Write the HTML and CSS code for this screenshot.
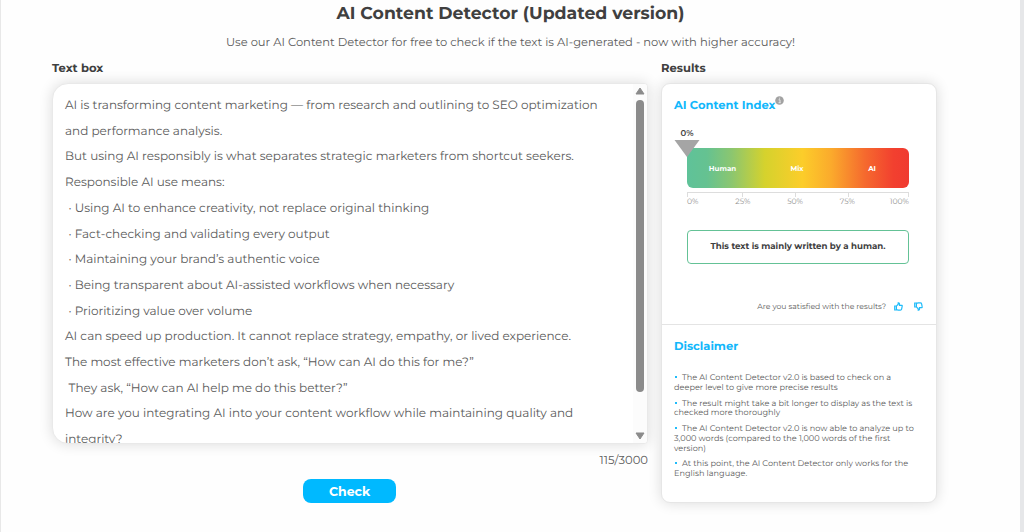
FILE: index.html
```
<!DOCTYPE html>
<html lang="en">

<head>
    <title>AI Content Detector</title>
    <meta charset="utf-8">
    <meta name="viewport" content="width=device-width, initial-scale=1">

    <link rel="stylesheet" href="styles.css">
</head>

<body>
    <h1>AI Content Detector (Updated version)</h1>
    <p class="intro">Use our AI Content Detector for free to check if the text is AI-generated - now with higher accuracy!</p>

    <div id="wrap">
        <div id="left">
            <h2>Text box</h2>
            <div id="textbox">
                <div class="text">
                    <p>AI is transforming content marketing — from research and outlining to SEO optimization</p>
                    <p>and performance analysis.</p>
                    <p>But using AI responsibly is what separates strategic marketers from shortcut seekers.</p>
                    <p>Responsible AI use means:</p>
                    <p class="item">· Using AI to enhance creativity, not replace original thinking</p>
                    <p class="item">· Fact-checking and validating every output</p>
                    <p class="item">· Maintaining your brand’s authentic voice</p>
                    <p class="item">· Being transparent about AI-assisted workflows when necessary</p>
                    <p class="item">· Prioritizing value over volume</p>
                    <p>AI can speed up production. It cannot replace strategy, empathy, or lived experience.</p>
                    <p>The most effective marketers don’t ask, “How can AI do this for me?”</p>
                    <p class="item">They ask, “How can AI help me do this better?”</p>
                    <p>How are you integrating AI into your content workflow while maintaining quality and</p>
                    <p>integrity?</p>
                </div>
                <div class="scroll">
                    <svg width="10" height="8" viewBox="0 0 10 8"><path d="M5 1 L9 7 H1 Z" fill="#8b8b8b" stroke="#8b8b8b" stroke-linejoin="round"/></svg>
                    <div class="thumb"></div>
                    <svg class="down" width="10" height="8" viewBox="0 0 10 8"><path d="M5 7 L9 1 H1 Z" fill="#8b8b8b" stroke="#8b8b8b" stroke-linejoin="round"/></svg>
                </div>
            </div>
            <div class="count">115/3000</div>
            <button class="check">Check</button>
        </div>

        <div id="right">
            <h2>Results</h2>
            <div id="card">
                <div class="index">
                    <h3>AI Content Index<svg class="info" width="9" height="9" viewBox="0 0 9 9"><circle cx="4.5" cy="4.5" r="4.3" fill="#a2a2a2"/><path d="M3.6 3.8 H5 V6.6 M3.5 6.7 H5.7 M4.1 2.2 H5.1" stroke="#e6e6e6" fill="none"/></svg></h3>
                    <div class="gauge">
                        <div class="pointer">
                            <span>0%</span>
                            <svg width="26" height="18" viewBox="0 0 26 18"><path d="M0.5 0 H25.5 L13 17 Z" fill="#a5a5a5"/></svg>
                        </div>
                        <div class="bar">
                            <span>Human</span>
                            <span>Mix</span>
                            <span>AI</span>
                        </div>
                        <div class="ruler"><i></i><i></i><i></i><i></i></div>
                        <div class="nums">
                            <span>0%</span>
                            <span>25%</span>
                            <span>50%</span>
                            <span>75%</span>
                            <span>100%</span>
                        </div>
                    </div>
                    <div class="result">This text is mainly written by a human.</div>
                    <div class="rate">
                        <span>Are you satisfied with the results?</span>
                        <svg width="9" height="9" viewBox="0 0 9 9"><path d="M0.7 4 H2.4 V8 H0.7 Z M2.4 4.1 L4.2 2.2 V0.8 Q5.8 0.4 5.5 3.3 H7.9 Q8.5 3.5 8.1 4.6 L7.6 7.2 Q7.4 8.2 6.4 8.2 H4.2 L2.4 7.7"/></svg>
                        <svg class="no" width="9" height="9" viewBox="0 0 9 9"><path d="M0.7 1 H2.4 V5 H0.7 Z M2.4 4.9 L4.2 6.8 V8.2 Q5.8 8.6 5.5 5.7 H7.9 Q8.5 5.5 8.1 4.4 L7.6 1.8 Q7.4 0.8 6.4 0.8 H4.2 L2.4 1.3"/></svg>
                    </div>
                </div>
                <div class="disclaimer">
                    <h3>Disclaimer</h3>
                    <ul>
                        <li>The AI Content Detector v2.0 is based to check on a<br>deeper level to give more precise results</li>
                        <li>The result might take a bit longer to display as the text is<br>checked more thoroughly</li>
                        <li>The AI Content Detector v2.0 is now able to analyze up to<br>3,000 words (compared to the 1,000 words of the first<br>version)</li>
                        <li>At this point, the AI Content Detector only works for the<br>English language.</li>
                    </ul>
                </div>
            </div>
        </div>
    </div>
</body>

</html>
```

FILE: styles.css
```
* {
    box-sizing: border-box;
}

body {
    margin: 0;
    height: 532px;
    overflow: hidden;
    font-family: Montserrat, Inter, sans-serif;
    text-rendering: geometricPrecision;
    color: #5b5b5b;
    background: #fefefe;
    border-left: 1px solid #e8e8e8;
    border-right: 4px solid #e6e7e9;
}

h1, h2, h3, p, ul {
    margin: 0;
    padding: 0;
}

h1 {
    padding-top: 3px;
    line-height: 22px;
    font-size: 17.3px;
    font-weight: 700;
    color: #404040;
    text-align: center;
}

.intro {
    margin-top: 8px;
    line-height: 18px;
    font-size: 11.53px;
    text-align: center;
}

h2 {
    line-height: 16px;
    font-size: 11.6px;
    font-weight: 700;
    color: #404040;
}

#wrap {
    display: flex;
    gap: 13px;
    margin: 9px 0 0 51px;
}

#left {
    width: 596px;
    display: flex;
    flex-direction: column;
}

#textbox {
    margin-top: 7px;
    height: 361px;
    display: flex;
    justify-content: space-between;
    overflow: hidden;
    background: white;
    border: 1px solid #e9e9e9;
    border-radius: 16px 4px 4px 16px;
    box-shadow: 0 0 14px rgba(0, 0, 0, .14);
}

.text {
    padding: 9px 0 0 12px;
    font-size: 12px;
    line-height: 25.7px;
    white-space: nowrap;
}

.item {
    padding-left: 3.5px;
}

.scroll {
    width: 14px;
    height: 100%;
    padding: 3px 0;
    display: flex;
    flex-direction: column;
    align-items: center;
    background: #fcfcfc;
}

.thumb {
    width: 8px;
    height: 292px;
    margin-top: 5px;
    border-radius: 4px;
    background: #8b8b8b;
}

.down {
    margin-top: auto;
}

.count {
    margin-top: 7px;
    line-height: 18px;
    font-size: 11.6px;
    text-align: right;
}

.check {
    width: 93px;
    height: 24px;
    margin: 10px 1px 0 0;
    padding: 0;
    align-self: center;
    border: 0;
    border-radius: 8px;
    background: #00b9ff;
    color: white;
    font: 700 12.5px Montserrat, Inter, sans-serif;
}

#right {
    width: 276px;
}

#card {
    margin-top: 7px;
    height: 420px;
    background: white;
    border: 1px solid #e6e6e6;
    border-radius: 9px;
    box-shadow: 0 0 14px rgba(0, 0, 0, .14);
}

h3 {
    line-height: 16px;
    font-size: 11.5px;
    font-weight: 700;
    color: #12b7fb;
}

.index {
    height: 241px;
    padding: 12px 13px 0 12px;
    border-bottom: 1px solid #e4e4e4;
}

.info {
    vertical-align: 4px;
}

.gauge {
    position: relative;
    width: 222px;
    margin: 35px 0 0 13px;
}

/* sits over the left end of the bar */
.pointer {
    position: absolute;
    top: -20px;
    left: -13px;
    width: 26px;
    text-align: center;
    font-size: 8.5px;
    font-weight: 600;
    line-height: 12px;
    color: #404040;
}

.pointer span, .pointer svg {
    display: block;
}

.bar {
    height: 40px;
    display: flex;
    justify-content: space-around;
    align-items: center;
    border-radius: 6px;
    background: linear-gradient(to right, #5fc299 0%, #65c291 9%, #8bc670 20%, #d5d22d 35%, #fccd2a 52%, #fbaa2c 65%, #f56a2e 80%, #f2402f 93%, #f03a30 100%);
    color: white;
    font-size: 7.1px;
    font-weight: 700;
}

.bar span {
    width: 75px;
    text-align: center;
}

.bar span:first-child {
    padding-right: 3px;
}

.bar span:nth-child(2) {
    padding-right: 2px;
}

.ruler {
    height: 5px;
    margin-top: 4px;
    display: flex;
    border: 1px solid #ddd;
    border-bottom: 0;
}

.ruler i {
    width: 53px;
    border-right: 1px solid #ddd;
}

.ruler i:first-child {
    width: 55px;
}

.ruler i:last-child {
    border: 0;
}

.nums {
    display: flex;
    justify-content: space-between;
    line-height: 9px;
    font-size: 7.7px;
    color: #909090;
}

.nums span:nth-child(2), .nums span:nth-child(3), .nums span:nth-child(4) {
    padding-left: 2px;
}

.result {
    width: 222px;
    height: 34px;
    margin: 24px 0 0 13px;
    border: 1.5px solid #64c296;
    border-radius: 4px;
    line-height: 33px;
    text-align: center;
    font-size: 8.65px;
    font-weight: 700;
    color: #404040;
}

.rate {
    margin-top: 37px;
    display: flex;
    justify-content: flex-end;
    align-items: center;
    line-height: 12px;
    font-size: 7.7px;
}

.rate svg {
    margin: -1px 0 0 8px;
    fill: none;
    stroke: #20bcfa;
    stroke-width: 1.2;
}

.rate svg.no {
    margin-left: 11px;
}

.disclaimer {
    padding: 13px 10px 0 12px;
}

.disclaimer ul {
    margin-top: 20px;
    list-style: none;
    font-size: 8.17px;
    line-height: 9.7px;
    white-space: nowrap;
}

.disclaimer li {
    margin-bottom: 6.2px;
}

.disclaimer li::before {
    content: "";
    display: inline-block;
    width: 2px;
    height: 2px;
    margin: 0 5px 2px 1px;
    background: #20bcfa;
}
```
